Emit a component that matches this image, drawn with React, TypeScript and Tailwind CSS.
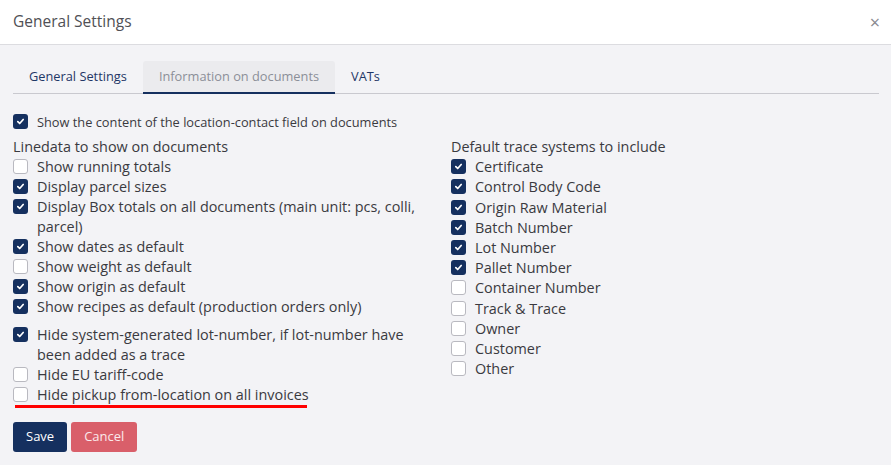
import React from "react";

const NAVY = "bg-[#15305f]";

function Box({ checked }: { checked?: boolean }) {
  return checked ? (
    <span className={`mt-[2px] flex h-[15px] w-[15px] shrink-0 items-center justify-center rounded-[3px] ${NAVY}`}>
      <svg width="9" height="9" viewBox="0 0 10 10">
        <path d="M2 5.2 L4.1 7.2 L8 2.8" fill="none" stroke="white" strokeWidth="1.9" strokeLinecap="round" strokeLinejoin="round" />
      </svg>
    </span>
  ) : (
    <span className="mt-[2px] h-[15px] w-[15px] shrink-0 rounded-[3px] border border-[#b9b9c0] bg-white" />
  );
}

function Row({ label, checked, className = "" }: { label: string; checked?: boolean; className?: string }) {
  return (
    <div className={`flex gap-[9px] text-[14.4px] text-[#3a3a3f] ${className}`}>
      <Box checked={checked} />
      <span>{label}</span>
    </div>
  );
}

const left: [string, boolean][] = [
  ["Show running totals", false],
  ["Display parcel sizes", true],
  ["Display Box totals on all documents (main unit: pcs, colli, parcel)", true],
  ["Show dates as default", true],
  ["Show weight as default", false],
  ["Show origin as default", true],
  ["Show recipes as default (production orders only)", true],
];

const right: [string, boolean][] = [
  ["Certificate", true],
  ["Control Body Code", true],
  ["Origin Raw Material", true],
  ["Batch Number", true],
  ["Lot Number", true],
  ["Pallet Number", true],
  ["Container Number", false],
  ["Track & Trace", false],
  ["Owner", false],
  ["Customer", false],
  ["Other", false],
];

export default function App() {
  return (
    <div className="h-[465px] w-[891px] overflow-hidden bg-[#f3f3f6] font-['Open_Sans',sans-serif]">
      <div className="flex h-[45px] items-center justify-between border-b border-[#dcdce0] bg-white pl-[13px] pr-[11px]">
        <span className="text-[15.5px] text-[#505055]">General Settings</span>
        <span className="text-[18px] leading-none text-[#8a8a8f]">×</span>
      </div>

      <div className="pl-[13px] pr-[12px] pt-[16px]">
        <div className="flex border-b border-[#c9c9cf] text-[12.8px]">
          <div className="flex h-[32px] items-center px-[16px] font-medium text-[#1f3766]">General Settings</div>
          <div className="-mb-px flex h-[33px] items-center rounded-t-[3px] border-b-2 border-[#15305f] bg-[#ebebee] px-[16px] text-[#8b8f98]">
            Information on documents
          </div>
          <div className="flex h-[32px] items-center px-[16px] font-medium text-[#1f3766]">VATs</div>
        </div>

        <div className="mt-[18px] flex gap-[9px] text-[12.8px] leading-[20px] text-[#3a3a3f]">
          <Box checked />
          <span>Show the content of the location-contact field on documents</span>
        </div>

        <div className="mt-[5px] flex">
          <div className="w-[438px] pr-[20px] leading-[20px]">
            <div className="text-[14.4px] text-[#3a3a3f]">Linedata to show on documents</div>
            {left.map(([l, c]) => (
              <Row key={l} label={l} checked={c} />
            ))}
            <Row className="mt-[8px]" label="Hide system-generated lot-number, if lot-number have been added as a trace" checked />
            <Row label="Hide EU tariff-code" />
            <div className="relative">
              <Row label="Hide pickup from-location on all invoices" />
              <div className="absolute left-[2px] top-[20px] h-[3px] w-[292px] bg-[#ff0000]" />
            </div>
          </div>
          <div className="leading-[20.2px]">
            <div className="text-[14.4px] text-[#3a3a3f]">Default trace systems to include</div>
            {right.map(([l, c]) => (
              <Row key={l} label={l} checked={c} />
            ))}
          </div>
        </div>

        <div className="mt-[17px] flex gap-[4px] text-[13px] font-medium">
          <button className={`h-[30px] rounded-[3px] ${NAVY} px-[13px] text-white`}>Save</button>
          <button className="h-[30px] rounded-[3px] bg-[#d95f6a] px-[13px] text-[#fbe9eb]">Cancel</button>
        </div>
      </div>
    </div>
  );
}
